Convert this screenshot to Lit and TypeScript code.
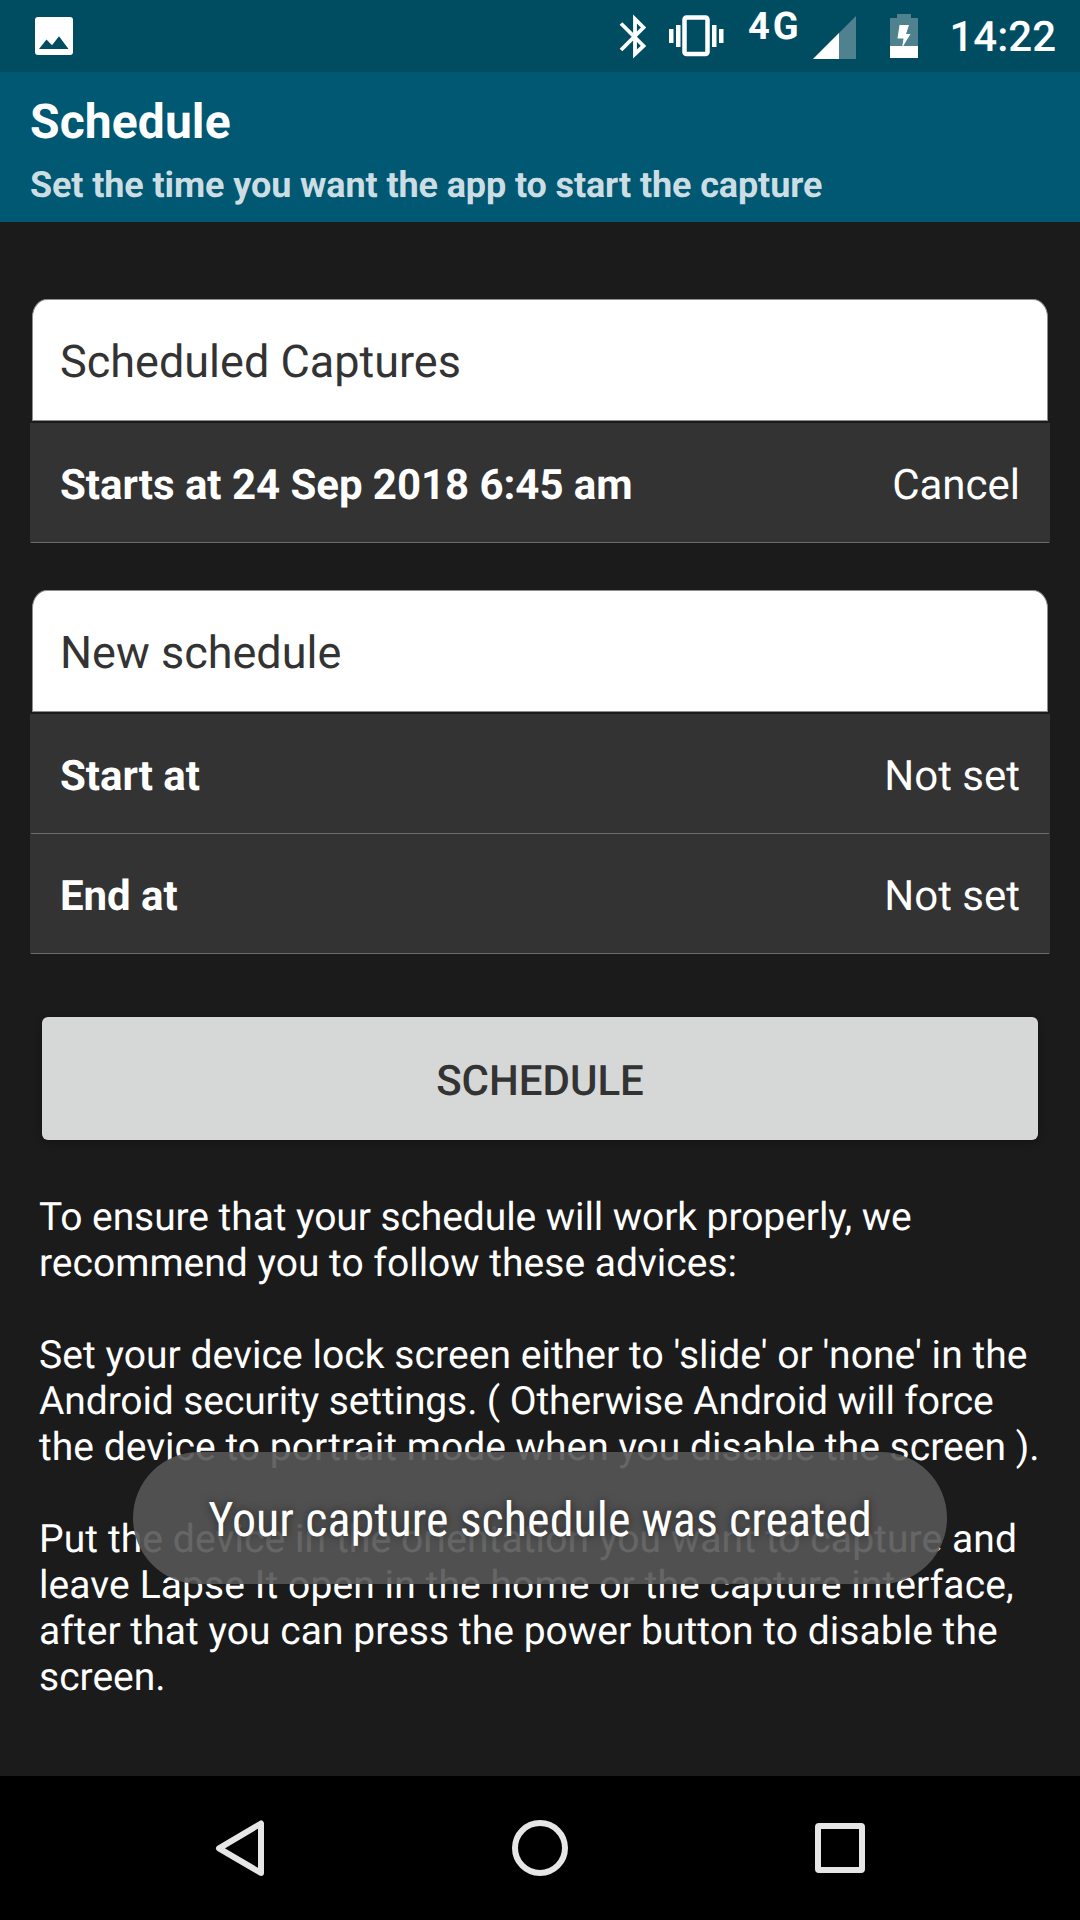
import { LitElement, html, css, svg } from "lit";
import { customElement, property } from "lit/decorators.js";
import { styleMap } from "lit/directives/style-map.js";

@customElement("status-bar")
class StatusBar extends LitElement {
  static styles = css`
    :host { display: block; }
    .bar { height: 72px; background: #004d62; display: flex; align-items: flex-start; color: #fff; }
    svg { display: block; flex: none; }
    .spacer { flex: 1; }
    .clock { width: 116px; text-align: right; font-size: 42px; line-height: 49px; margin: 13px 24px 0 0; font-weight: 500; }
  `;
  render() {
    return html`<div class="bar">
      <svg width="80" height="72" viewBox="0 0 80 72"><path fill="#fff" fill-rule="evenodd" d="M38 17H70Q73 17 73 20V52Q73 55 70 55H38Q35 55 35 52V20Q35 17 38 17ZM39 49H68.500L59 36.200L52 45.300L46.500 39.500Z"/></svg>
      <div class="spacer"></div>
      ${this.indicators()}
      <div class="clock">14:22</div>
    </div>`;
  }
  indicators() {
    return html`<svg width="330" height="72" viewBox="610 0 330 72">
      ${svg`
      <path fill="none" stroke="#fff" stroke-width="3.800" d="M621 23.500L643.500 46L635 54V19L643.500 27.500L621 50"/>
      <rect x="684.500" y="17.500" width="23" height="36.500" rx="2" fill="none" stroke="#fff" stroke-width="4.500"/>
      <path fill="#fff" d="M669 29h4.500v14H669zM676 25h4.500v22H676zM712 25h4.500v22H712zM719 29h4.500v14H719z"/>
      <text x="748" y="39" font-size="38" font-weight="700" fill="#fff" letter-spacing="3">4G</text>
      <path fill="#50818f" d="M856 16V59H813Z"/>
      <path fill="#fff" d="M839 33V59H813Z"/>
      <path fill="#50818f" d="M897 14h14v4h7v28h-28V18h7z"/>
      <path fill="#fff" d="M890 46h28v12h-28zM899.500 25h9.500l-3 9h4.500l-8.500 14 1.500-9.500h-6z"/>
      `}
    </svg>`;
  }
}

@customElement("list-row")
class ListRow extends LitElement {
  @property() label = "";
  @property() value = "";
  static styles = css`
    :host { display: block; }
    .row { box-sizing: border-box; height: 120px; padding: 5px 30px 0; background: linear-gradient(#6c6c6c, #6c6c6c) 1px 119px / 1018px 1px no-repeat, #333;
      display: flex; align-items: center; justify-content: space-between; color: #fff; font-size: 42px; line-height: 49px; }
    .label { font-weight: 700; letter-spacing: -0.04px; }
  `;
  render() {
    return html`<div class="row"><span class="label">${this.label}</span><span>${this.value}</span></div>`;
  }
}

@customElement("nav-bar")
class NavBar extends LitElement {
  static styles = css`
    :host { display: block; }
    .nav { height: 144px; background: #000; }
    svg { display: block; }
  `;
  render() {
    return html`<div class="nav"><svg width="1080" height="144" viewBox="0 0 1080 144" fill="none" stroke="#e6e6e6" stroke-width="6" stroke-linejoin="round">
      <path d="M261 47.500V97L219 72.300Z"/><circle cx="540" cy="72" r="25"/><rect x="818" y="50" width="44" height="44" rx="1"/>
    </svg></div>`;
  }
}

@customElement("app-root")
class AppRoot extends LitElement {
  static styles = css`
    :host { display: block; font-family: Roboto, sans-serif; text-rendering: geometricPrecision; }
    .screen { position: relative; width: 1080px; height: 1920px; background: #1b1b1b; display: flex; flex-direction: column; overflow: hidden; }
    .header { box-sizing: border-box; height: 150px; padding: 22px 30px 0; background: #005872; color: #fff; font-weight: 700; }
    .title { font-size: 48px; line-height: 56px; letter-spacing: 0.1px; }
    .subtitle { font-size: 36px; line-height: 42px; margin-top: 14px; color: #ccdee3; letter-spacing: -0.12px; }
    .content { flex: 1; padding: 77px 30px 0; }
    .group { margin-bottom: 47px; }
    .group-title { box-sizing: border-box; height: 122px; margin: 0 2px 2px; padding: 2px 27px 0; display: flex; align-items: center;
      background: #fff; border: 1px solid #8d8d8d; border-radius: 15px 15px 0 0 / 18px 18px 0 0; font-size: 45px; line-height: 53px; color: #333; }
    .button { box-sizing: border-box; height: 123px; margin: 63px 12px 0; padding-top: 5px; border-radius: 6px; background: #d6d7d7; color: #333; font-size: 42px; font-weight: 500;
      display: flex; align-items: center; justify-content: center; box-shadow: 0 3px 8px #0004; }
    .advice { margin: 54px 0 0 9px; color: #fff; font-size: 39px; line-height: 46px; white-space: pre; }
    .line { height: 46px; }
    .toast { box-sizing: border-box; position: absolute; left: 133px; top: 1452px; width: 814px; height: 132px; padding-top: 4px; border-radius: 66px; background: rgb(86 86 86 / 0.905);
      display: flex; align-items: center; justify-content: center; color: #fff; }
    .toast-text { font-size: 48px; line-height: 56px; letter-spacing: 0.07px; white-space: nowrap; font-family: "Roboto Condensed", Roboto, sans-serif; font-stretch: 75%; text-shadow: 0 0 8px #0008; }
  `;
  render() {
    return html`<div class="screen">
      <status-bar></status-bar>
      <div class="header"><div class="title">Schedule</div><div class="subtitle">Set the time you want the app to start the capture</div></div>
      <div class="content">
        <div class="group">
          <div class="group-title">Scheduled Captures</div>
          <list-row label="Starts at 24 Sep 2018 6:45 am" value="Cancel"></list-row>
        </div>
        <div class="group">
          <div class="group-title">New schedule</div>
          <list-row label="Start at" value="Not set"></list-row>
          <list-row label="End at" value="Not set"></list-row>
        </div>
        <div class="button">SCHEDULE</div>
        <div class="advice">${ADVICE.map(([text, tracking]) => html`<div class="line" style=${styleMap({ letterSpacing: `${tracking}px` })}>${text}</div>`)}</div>
      </div>
      <nav-bar></nav-bar>
      <div class="toast"><span class="toast-text">Your capture schedule was created</span></div>
    </div>`;
  }
}

// Each line of the advice text with its letter spacing in pixels.
const ADVICE: [string, number][] = [
  ["To ensure that your schedule will work properly, we", -0.08],
  ["recommend you to follow these advices:", 0],
  ["", 0],
  ["Set your device lock screen either to 'slide' or 'none' in the", 0.055],
  ["Android security settings. ( Otherwise Android will force", -0.11],
  ["the device to portrait mode when you disable the screen ).", 0.025],
  ["", 0],
  ["Put the device in the orientation you want to capture and", 0.09],
  ["leave Lapse It open in the home or the capture interface,", 0.09],
  ["after that you can press the power button to disable the", 0.045],
  ["screen.", 0],
];
